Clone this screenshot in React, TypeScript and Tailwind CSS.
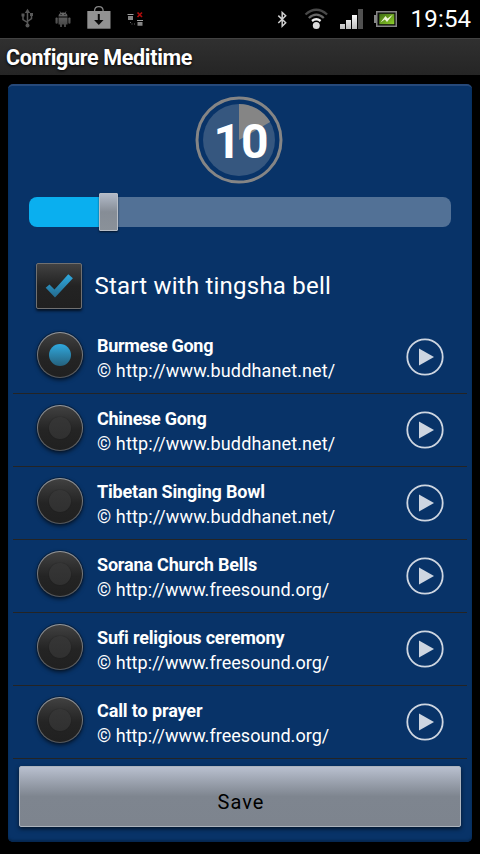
import { useState } from 'react'

const sounds = [
  { name: 'Burmese Gong', source: '© http://www.buddhanet.net/', nameStyle: 'tracking-[-0.3px]', sourceStyle: 'tracking-[0.13px]' },
  { name: 'Chinese Gong', source: '© http://www.buddhanet.net/', nameStyle: 'tracking-[-0.27px]', sourceStyle: 'tracking-[0.13px]' },
  { name: 'Tibetan Singing Bowl', source: '© http://www.buddhanet.net/', nameStyle: 'tracking-[-0.18px]', sourceStyle: 'tracking-[0.13px]' },
  { name: 'Sorana Church Bells', source: '© http://www.freesound.org/', nameStyle: 'tracking-[-0.19px]', sourceStyle: 'tracking-[0.04px]' },
  { name: 'Sufi religious ceremony', source: '© http://www.freesound.org/', nameStyle: 'tracking-[-0.19px]', sourceStyle: 'tracking-[0.04px]' },
  { name: 'Call to prayer', source: '© http://www.freesound.org/', nameStyle: 'tracking-[-0.12px]', sourceStyle: 'tracking-[0.04px]' },
]

function StatusBar() {
  return (
    <div className="flex h-[38px] bg-black">
      <svg width="400" height="38" viewBox="0 0 400 38">
        <defs>
          <linearGradient id="bars" gradientUnits="userSpaceOnUse" x1="0" y1="14" x2="0" y2="29">
            <stop offset="0" stopColor="#fff" />
            <stop offset="1" stopColor="#bbb" />
          </linearGradient>
          <linearGradient id="droid" gradientUnits="userSpaceOnUse" x1="0" y1="12" x2="0" y2="27">
            <stop offset="0" stopColor="#6c6c6c" />
            <stop offset="1" stopColor="#424242" />
          </linearGradient>
          <linearGradient id="charge" x1="0" y1="0" x2="1" y2="1">
            <stop offset="0" stopColor="#3f6d12" />
            <stop offset="1" stopColor="#8ed02a" />
          </linearGradient>
        </defs>
        {/* usb */}
        <g stroke="#585858" strokeWidth="1.5" fill="none">
          <path d="M27.500 12v13M23 15v4.500l4.500 3M31.500 15v3.500l-4 3" />
          <path d="M27.500 8.800l2.700 4.200h-5.400z" fill="#585858" stroke="none" />
          <circle cx="27.500" cy="25.500" r="2" fill="#585858" stroke="none" />
          <path d="M21.500 15h3M30 14.500h3" strokeWidth="2.800" />
        </g>
        {/* android */}
        <g fill="url(#droid)">
          <path d="M58.500 16.500c0-2.700 1.800-4 4.500-4s4.500 1.300 4.500 4z" />
          <path d="M58.500 17.500h9v7h-1.500v2.500h-2v-2.500h-2v2.500h-2v-2.500h-1.500z" />
          <rect x="55.500" y="17.500" width="2.200" height="6.200" rx="1" />
          <rect x="68.300" y="17.500" width="2.200" height="6.200" rx="1" />
        </g>
        <path d="M60 11.500l1.200 2M66 11.500l-1.200 2" stroke="#666" strokeWidth=".8" />
        <path d="M60.600 14.500h1M64.400 14.500h1" stroke="#111" />
        {/* market bag */}
        <path d="M94.500 11.500c0-3.500 2-4.800 4.300-4.800s4.400 1.300 4.400 4.800" stroke="#858585" strokeWidth="1.300" fill="none" />
        <path d="M87.300 11h23.200v17.700H87.300z" fill="#929292" />
        <path d="M97.800 14h2v6h3.700l-4.700 5-4.700-5h3.700z" fill="#080808" />
        {/* disconnected */}
        <path d="M128 16h5v4h-5zM137.500 22h5v3.800h-5z" fill="#858585" />
        <path d="M127.500 14.500h6M137 20.500h6" stroke="#a0a0a0" />
        <path d="M137.500 12.500l4.500 4.500M142 12.500l-4.500 4.500" stroke="#b00c0c" strokeWidth="1.700" />
        <path d="M130 22.500h1M131.500 24h1M134 24h1" stroke="#666" />
        {/* bluetooth */}
        <path d="M278.300 15.600l7.400 7.200-3.500 3.500V12.400l3.500 3.400-7.400 7.200" stroke="#d0d0d0" strokeWidth="1.500" fill="none" />
        {/* wifi */}
        <g fill="none" strokeWidth="2.300">
          <path d="M305.500 14.500q10.800-9.500 21.600 0" stroke="#484848" />
          <path d="M308.800 18q7.500-6.800 15 0" stroke="#666" />
          <path d="M312 21q4.300-3.500 8.600 0" stroke="#eee" />
        </g>
        <circle cx="316.300" cy="25.500" r="3.500" fill="#dcdcdc" />
        {/* signal */}
        <path d="M340 24h5v5h-5zM346 20h5v9h-5zM352 15h5v14h-5z" fill="url(#bars)" />
        <path d="M358 9h5v20h-5z" fill="#505050" />
        {/* battery */}
        <path d="M376 11h21v16h-21v-4h-2v-8h2z" fill="#858585" />
        <path d="M377.500 12.500h18v13h-18z" fill="#0c0c0c" />
        <path d="M379.300 13.800h15v10.400h-15z" fill="url(#charge)" />
        <path d="M380.500 22.500l5-6.500 2 2.500 5.500-4-6 7.500-2.200-2.500z" fill="#f0f6dc" />
      </svg>
      <span className="ml-[10.5px] text-[24px] leading-[39px] tracking-[0.2px] text-white">19:54</span>
    </div>
  )
}

function MinutesDial() {
  return (
    <svg className="mx-auto block" width="88" height="88" viewBox="0 0 88 88">
      <circle cx="44" cy="44" r="42" fill="none" stroke="#858585" strokeWidth="3" />
      <circle cx="44" cy="44" r="36" fill="#36577f" />
      <path d="M44 44V8A36 36 0 0 1 75.200 26z" fill="#858585" />
      <text x="18.500" y="62" fontSize="48" fontWeight="700" fill="#fff">10</text>
    </svg>
  )
}

function Radio({ checked }: { checked: boolean }) {
  return (
    <span className="flex h-[46px] w-[46px] shrink-0 rounded-full bg-linear-to-b from-[#989898] to-[#555] p-px shadow-[0_2px_4px_rgba(0,0,0,0.65)] ring-1 ring-[#0b1a2e]/60">
      <span className="flex flex-1 items-center justify-center rounded-full bg-linear-to-b from-[#414141] via-[#242424] via-55% to-[#202020]">
        {checked ? (
          <span className="h-[22px] w-[22px] rounded-full bg-linear-to-b from-[#2fa9df] to-[#24617d]" />
        ) : (
          <span className="h-[22px] w-[22px] rounded-full bg-linear-to-b from-[#363636] to-[#303030] shadow-[0_0_1px_#1a1a1a]" />
        )}
      </span>
    </span>
  )
}

export default function App() {
  const [selected, setSelected] = useState(0)

  return (
    <div className="flex h-[854px] w-[480px] flex-col overflow-hidden bg-black font-['Roboto',sans-serif] text-white">
      <StatusBar />
      <header className="h-[37px] border-t border-[#424242] bg-linear-to-b from-[#303030] to-[#252525] pl-[6px]">
        <h1 className="text-[21.5px] leading-[38px] font-bold tracking-[-0.33px] [text-shadow:0_1px_3px_#000]">
          Configure Meditime
        </h1>
      </header>

      <main className="mx-2 mt-[9px] flex h-[758px] flex-col rounded-[5px] border-t-2 border-[#26497a] bg-[#083368] pt-[10px] shadow-[inset_0_-2px_2px_#062851]">
        <div className="pr-[2px]">
          <MinutesDial />
        </div>

        {/* Duration slider */}
        <div className="mt-[9px] ml-[21px] flex h-[38px] w-[422px] items-center">
          <div className="h-[30px] w-[70px] rounded-l-[8px] bg-[#0aafef]" />
          <div className="z-10 h-[38px] w-[19px] rounded-[1px] border border-[#b8bec6] bg-linear-to-b from-[#b2bac8] via-[#868d96] via-50% to-[#8a9199] shadow-[0_1px_2px_rgba(0,0,0,0.6)]" />
          <div className="h-[30px] flex-1 rounded-r-[8px] bg-[#527196]" />
        </div>

        <label className="mt-[32px] ml-[28px] flex h-[46px] items-center">
          <span className="h-[46px] w-[46px] rounded-[2px] border border-[#707070] bg-linear-to-b from-[#424242] via-[#232323] via-50% to-[#202020] shadow-[0_2px_3px_rgba(0,0,0,0.7)]">
            <svg width="44" height="44" viewBox="0 0 44 44">
              <defs>
                <linearGradient id="tick" x1="0" y1="0" x2="0" y2="1">
                  <stop offset="0" stopColor="#2faae0" />
                  <stop offset="1" stopColor="#246a8d" />
                </linearGradient>
              </defs>
              <path d="M8.700 23.800L12.500 20.500L17.500 25.500L31.300 10.200L35.900 14.300L18 33.500z" fill="url(#tick)" />
            </svg>
          </span>
          <span className="ml-[12.5px] text-[24px] leading-none tracking-[0.22px] whitespace-nowrap">Start with tingsha bell</span>
        </label>

        <ul className="mx-[5px] mt-[12px]">
          {sounds.map((sound, i) => (
            <li
              key={sound.name}
              onClick={() => setSelected(i)}
              className="flex h-[73px] border-b border-[#242424] pl-[24px]"
            >
              <div className="pt-[11px]">
                <Radio checked={i === selected} />
              </div>
              <div className="ml-[14px] w-[309px] pt-[12px] whitespace-nowrap">
                <p className={`text-[18px] leading-[25px] font-bold ${sound.nameStyle}`}>{sound.name}</p>
                <p className={`text-[18px] leading-[25px] ${sound.sourceStyle}`}>{sound.source}</p>
              </div>
              <svg className="mt-[17px]" width="38" height="38" viewBox="0 0 38 38">
                <circle cx="19" cy="19" r="17.700" fill="none" stroke="#ced6e1" strokeWidth="1.800" />
                <path d="M13 10.500v17l15-8.500z" fill="#ced6e1" />
              </svg>
            </li>
          ))}
        </ul>

        <button className="mt-[7px] ml-[11px] h-[61px] w-[442px] rounded-[2px] border border-[#adb4bd] bg-linear-to-b from-[#b9c0cf] via-[#7e858f] via-50% to-[#7d848e] pt-[11px] pl-[2px] text-[20px] tracking-[1px] text-black shadow-[0_2px_4px_rgba(0,0,0,0.6)]">
          Save
        </button>
      </main>
    </div>
  )
}
